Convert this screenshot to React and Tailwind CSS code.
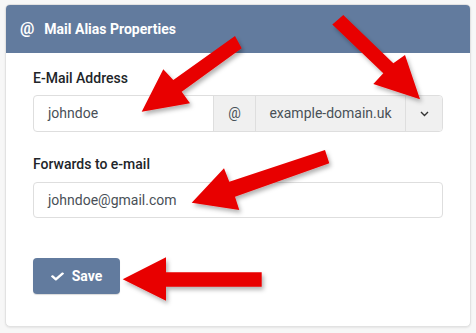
import React from "react";

function Check() {
  return (
    <svg width="13" height="11" viewBox="0 0 512 512" fill="currentColor" preserveAspectRatio="none">
      <path d="M173.898 439.404l-166.4-166.4c-9.997-9.997-9.997-26.206 0-36.204l36.203-36.204c9.997-9.998 26.207-9.998 36.204 0L192 312.69 432.095 72.596c9.997-9.997 26.207-9.997 36.204 0l36.203 36.204c9.997 9.997 9.997 26.206 0 36.204l-294.4 294.401c-9.998 9.997-26.207 9.997-36.204-.001z" />
    </svg>
  );
}

function Chevron() {
  return (
    <svg width="9" height="6" viewBox="0 0 9 6" fill="none" stroke="#333" strokeWidth="1.4">
      <path d="M1 1l3.5 3.5L8 1" />
    </svg>
  );
}

function Arrows() {
  return (
    <svg className="absolute left-0 top-0 pointer-events-none" width="476" height="333" viewBox="0 0 476 333">
      <defs>
        <filter id="sh" x="-20%" y="-20%" width="140%" height="140%">
          <feDropShadow dx="2" dy="3" stdDeviation="2" floodColor="#000" floodOpacity="0.3" />
        </filter>
      </defs>
      <g fill="#e80606" filter="url(#sh)">
        <polygon points="141.7,111.7 163.3,69.3 173.3,80 235,36 241.7,48.3 181.7,91.7 190,103.3" />
        <polygon points="420,99.3 405,55 393.3,63.3 343.3,15 332.3,24.5 383.3,73.3 373.3,84" />
        <polygon points="191.7,202.7 224,168.3 229.3,181.7 325,150 329.3,163.3 235,196.7 239.3,210" />
        <polygon points="122.7,279.3 166,257.3 166,272.3 261.7,272.3 261.7,286.7 166,286.7 166,300.7" />
      </g>
    </svg>
  );
}

export default function App() {
  return (
    <div
      className="relative w-[476px] h-[333px] bg-[#f7f7f7] pt-[4px] pl-[5px] overflow-hidden"
      style={{ fontFamily: "Roboto, 'Liberation Sans', sans-serif" }}
    >
      <div className="w-[466px] h-[323px] bg-white border border-[#e2e2e2] rounded-[5px] shadow-[0_1px_2px_rgba(0,0,0,0.08)] flex flex-col">
        <div className="h-[48px] bg-[#627b9e] rounded-t-[4px] flex items-center pl-[14px] gap-[10px] text-white font-bold text-[14px]">
          <span className="text-[16px] leading-none">@</span>
          <span>Mail Alias Properties</span>
        </div>
        <div className="px-[27px] pt-[15px] flex flex-col">
          <div className="text-[14px] leading-[20px] font-medium text-[#212529] mb-[7px]">E-Mail Address</div>
          <div className="flex h-[37px] border border-[#dedede] rounded-[4px] text-[14px] text-[#495057]">
            <div className="flex-1 flex items-center pl-[14px]">johndoe</div>
            <div className="w-[42px] flex items-center justify-center bg-[#f0f0f0] border-l border-[#dedede]">@</div>
            <div className="w-[150px] flex items-center justify-center bg-[#f0f0f0] border-l border-[#dedede]">example-domain.uk</div>
            <div className="w-[37px] flex items-center justify-center bg-[#f0f0f0] border-l border-[#dedede] rounded-r-[4px]">
              <Chevron />
            </div>
          </div>
          <div className="mt-[22px] text-[14px] leading-[20px] font-medium text-[#212529] mb-[8px]">Forwards to e-mail</div>
          <div className="flex items-center h-[36px] border border-[#dedede] rounded-[4px] pl-[14px] text-[14px] text-[#495057]">
            johndoe@gmail.com
          </div>
          <div className="mt-[40px]">
            <button className="h-[36px] w-[87px] bg-[#627b9e] rounded-[4px] text-white text-[14px] font-bold flex items-center justify-center gap-[8px] shadow-[0_1px_1px_rgba(0,0,0,0.15)]">
              <Check />
              <span>Save</span>
            </button>
          </div>
        </div>
      </div>
      <Arrows />
    </div>
  );
}
